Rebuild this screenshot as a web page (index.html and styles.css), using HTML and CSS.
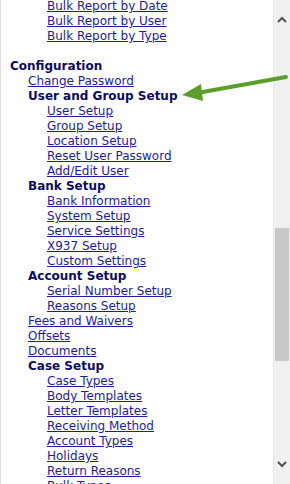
FILE: index.html
```html
<!DOCTYPE html>
<html>
  <head>
    <title>Configuration Menu</title>
    <link rel="stylesheet" href="styles.css">
  </head>
  <body>
    <div class="frame">
      <div class="menu">
        <a class="item sub" href="#">Bulk Report by Date</a>
        <a class="item sub" href="#">Bulk Report by User</a>
        <a class="item sub" href="#">Bulk Report by Type</a>
        <div class="spacer"></div>
        <div class="item top">Configuration</div>
        <a class="item mid" href="#">Change Password</a>
        <div class="item mid head">User and Group Setup</div>
        <a class="item sub" href="#">User Setup</a>
        <a class="item sub" href="#">Group Setup</a>
        <a class="item sub" href="#">Location Setup</a>
        <a class="item sub" href="#">Reset User Password</a>
        <a class="item sub" href="#">Add/Edit User</a>
        <div class="item mid head">Bank Setup</div>
        <a class="item sub" href="#">Bank Information</a>
        <a class="item sub" href="#">System Setup</a>
        <a class="item sub" href="#">Service Settings</a>
        <a class="item sub" href="#">X937 Setup</a>
        <a class="item sub" href="#">Custom Settings</a>
        <div class="item mid head">Account Setup</div>
        <a class="item sub" href="#">Serial Number Setup</a>
        <a class="item sub" href="#">Reasons Setup</a>
        <a class="item mid" href="#">Fees and Waivers</a>
        <a class="item mid" href="#">Offsets</a>
        <a class="item mid" href="#">Documents</a>
        <div class="item mid head">Case Setup</div>
        <a class="item sub" href="#">Case Types</a>
        <a class="item sub" href="#">Body Templates</a>
        <a class="item sub" href="#">Letter Templates</a>
        <a class="item sub" href="#">Receiving Method</a>
        <a class="item sub" href="#">Account Types</a>
        <a class="item sub" href="#">Holidays</a>
        <a class="item sub" href="#">Return Reasons</a>
        <a class="item sub" href="#">Bulk Types</a>
      </div>
      <div class="scrollbar">
        <svg class="arrow-btn" width="16" height="16" viewBox="0 0 16 16">
          <path d="M4 10 L8 6 L12 10" fill="none" stroke="#505050" stroke-width="2"/>
        </svg>
        <div class="track">
          <div class="thumb"></div>
        </div>
        <svg class="arrow-btn" width="16" height="16" viewBox="0 0 16 16">
          <path d="M4 6 L8 10 L12 6" fill="none" stroke="#505050" stroke-width="2"/>
        </svg>
      </div>
      <svg class="pointer" width="110" height="30" viewBox="0 0 110 30">
        <line x1="107" y1="4" x2="18" y2="20" stroke="#5b9e2c" stroke-width="4" stroke-linecap="round"/>
        <polygon points="3,22 22,11 24,28" fill="#5b9e2c"/>
      </svg>
    </div>
  </body>
</html>
```

FILE: styles.css
```css
html, body {
  margin: 0;
  padding: 0;
  background-color: #fff;
}

.frame {
  position: relative;
  display: flex;
  height: 484px;
  overflow: hidden;
  border-left: 1px solid #ddd;
}

.menu {
  flex: 1;
  display: flex;
  flex-direction: column;
  align-items: flex-start;
  margin-top: -1px;
  font-family: "DejaVu Sans", Verdana, sans-serif;
  font-size: 12px;
}

.item {
  display: block;
  flex: none;
  line-height: 15px;
  height: 15px;
  white-space: nowrap;
}

a.item {
  color: #1c1c9c;
  text-decoration: underline;
}

.spacer {
  flex: none;
  height: 15px;
}

.top {
  padding-left: 9px;
  font-weight: bold;
  color: #0a0a66;
}

.mid {
  padding-left: 27px;
}

.head {
  font-weight: bold;
  color: #0a0a66;
}

.sub {
  padding-left: 46px;
}

.scrollbar {
  width: 16px;
  flex: none;
  display: flex;
  flex-direction: column;
  background-color: #f0f0f0;
  border-left: 1px solid #e8e8e8;
}

.arrow-btn {
  flex: none;
  margin: 12px 0;
}

.track {
  flex: 1;
  padding-top: 188px;
}

.thumb {
  margin: 0 1px;
  height: 133px;
  background-color: #c8c8c8;
}

.pointer {
  position: absolute;
  left: 178px;
  top: 73px;
}
```
